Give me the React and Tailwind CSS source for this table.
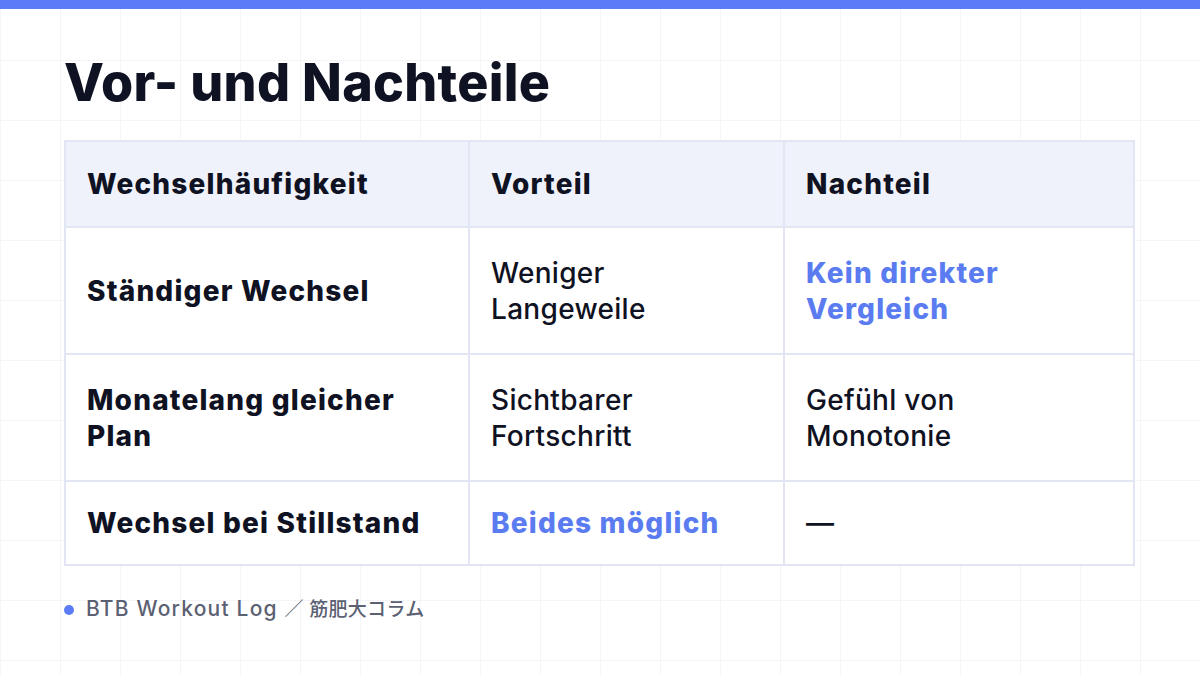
export default function App() {
  const head = "bg-[#f0f2fb] flex items-center px-[21px] text-[28px] leading-[36px] font-extrabold tracking-[1.2px] text-[#0f1222]";
  const cell = "bg-white flex items-center px-[21px] text-[28px] leading-[36px]";
  const strong = " font-extrabold tracking-[1.2px]";
  const normal = " font-medium tracking-[0.3px] text-[#0f1222]";
  return (
    <div className="w-[1200px] h-[675px] bg-white overflow-hidden flex flex-col font-[Inter,'Noto_Sans_CJK_JP',sans-serif] bg-[linear-gradient(to_right,#f4f5f9_1px,transparent_1px),linear-gradient(to_bottom,#f4f5f9_1px,transparent_1px)] bg-[size:60px_60px]">
      <div className="h-[9px] bg-[#5b7cf6] shrink-0" />
      <div className="px-[64px] flex flex-col">
        <h1 className="mt-[43px] text-[52px] leading-[62px] font-extrabold tracking-[0.3px] text-[#0f1222]">
          Vor- und Nachteile
        </h1>
        <div className="mt-[26px] grid grid-cols-[402px_313px_348px] grid-rows-[84px_125px_125px_82px] gap-[2px] p-[2px] bg-[#e2e5f3] w-[1071px]">
          <div className={head}>Wechselhäufigkeit</div>
          <div className={head}>Vorteil</div>
          <div className={head}>Nachteil</div>

          <div className={cell + strong + " text-[#0f1222]"}>Ständiger Wechsel</div>
          <div className={cell + normal}>Weniger<br />Langeweile</div>
          <div className={cell + strong + " text-[#5b7cf0]"}>Kein direkter<br />Vergleich</div>

          <div className={cell + strong + " text-[#0f1222]"}>Monatelang gleicher<br />Plan</div>
          <div className={cell + normal}>Sichtbarer<br />Fortschritt</div>
          <div className={cell + normal}>Gefühl von<br />Monotonie</div>

          <div className={cell + strong + " text-[#0f1222]"}>Wechsel bei Stillstand</div>
          <div className={cell + strong + " text-[#5b7cf0]"}>Beides möglich</div>
          <div className={cell + normal}>—</div>
        </div>
        <div className="mt-[28px] flex items-center gap-[12px] text-[21px] leading-[30px] tracking-[1.2px] text-[#5b6172] font-medium">
          <span className="w-[10px] h-[10px] rounded-full bg-[#5b7cf6]" />
          <span>
            BTB Workout Log <span className="text-[19px] tracking-[0.3px]">／ 筋肥大コラム</span>
          </span>
        </div>
      </div>
    </div>
  );
}
